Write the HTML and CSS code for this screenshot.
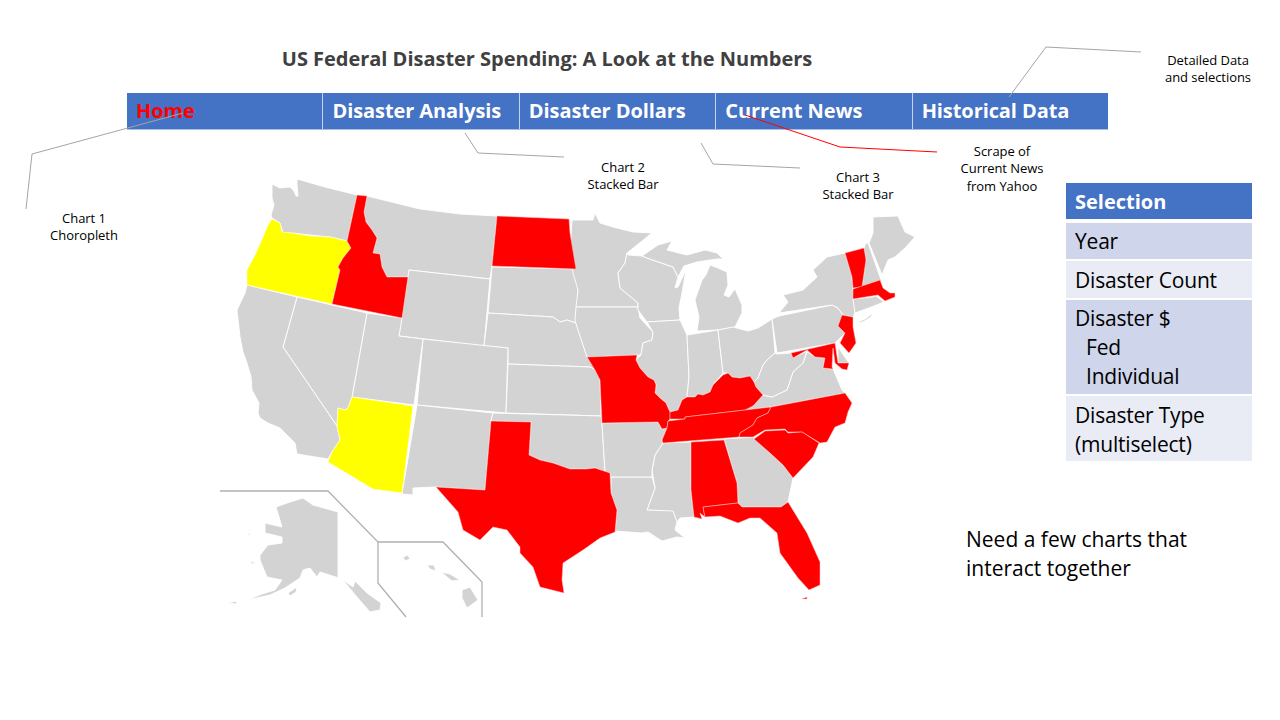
FILE: index.html
```html
<!DOCTYPE html>
<html lang="en">
<head>
<meta charset="utf-8">
<title>US Federal Disaster Spending</title>
<link rel="stylesheet" href="styles.css">
</head>
<body>
<main class="slide">
  <header class="top">
    <h1 class="title">US Federal Disaster Spending: A Look at the Numbers</h1>
    <nav class="nav">
      <div class="tab tab-active">Home</div>
      <div class="tab">Disaster Analysis</div>
      <div class="tab">Disaster Dollars</div>
      <div class="tab">Current News</div>
      <div class="tab">Historical Data</div>
    </nav>
  </header>
  <section class="body">
    <aside class="table">
      <div class="row row-head">Selection</div>
      <div class="row row-a">Year</div>
      <div class="row row-b row-tall">Disaster Count</div>
      <div class="row row-a">Disaster $<span class="sub">Fed</span><span class="sub">Individual</span></div>
      <div class="row row-b">Disaster Type<br>(multiselect)</div>
    </aside>
  </section>

  <svg class="canvas" viewBox="0 0 1280 720" width="1280" height="720" aria-hidden="true">
    <g class="gray">
      <path d="M297 179L325 187L357 195L347 241L330 237L310 235L292 233L283 233L280 223L272 218L271 215L274 205L272 198L272 184L280 188L290 187L294 191L296 196L298 196L297 185Z"/>
      <path d="M367 196L420 209L460 214L497 216L492 266L490 279L409 270L408 277L403 277L387 277L382 267L380 254L373 253L377 238L372 230L366 222L364 212Z"/>
      <path d="M409 270L490 279L484 346L399 336Z"/>
      <path d="M492 267L574 269L578 280L578 308L576 323L567 320L560 322L553 317L488 313Z"/>
      <path d="M488 313L553 317L560 322L567 320L576 323L580 335L587 357L596 370L590 367L508 364L508 348L484 346Z"/>
      <path d="M423 339L508 348L506 413L417 405Z"/>
      <path d="M508 364L590 367L596 370L600 380L601 416L506 413Z"/>
      <path d="M367 313L402 318L399 336L423 339L414 405L352 397Z"/>
      <path d="M297 297L367 313L352 397L348 408L345 410L338 408L337 426L283 347Z"/>
      <path d="M247 285L297 297L283 347L337 426L340 440L332 452L328 459L297 454L295 443L280 428L268 423L260 418L258 413L259 403L252 390L251 377L247 363L243 352L240 337L237 310L245 293Z"/>
      <path d="M417 405L493 413L491 421L485 490L436 487L413 488L413 495L402 494Z"/>
      <path d="M493 413L601 416L602 423L605 472L595 468L586 469L570 469L553 463L540 460L529 455L531 422L491 421Z"/>
      <path d="M572 220L593 220L595 213L600 223L613 227L633 232L652 233L627 253L625 263L618 273L620 288L638 303L638 307L576 307L578 290L573 273L570 250Z"/>
      <path d="M576 307L638 307L640 318L653 332L652 340L643 343L641 355L587 357L577 327L575 320Z"/>
      <path d="M627 253L628 255L642 256L647 258L673 267L678 277L675 288L678 287L686 270L682 293L679 308L680 320L647 322L638 310L638 303L620 288L618 273L625 263Z"/>
      <path d="M642 256L658 245L672 241L667 250L687 255L705 250L717 253L723 259L717 259L697 262L684 266L678 277L673 267L647 258Z"/>
      <path d="M710 265L718 268L727 272L728 285L724 295L729 297L735 289L742 305L742 313L735 327L718 330L697 331L699 317L695 300L702 280L706 275Z"/>
      <path d="M647 322L680 320L687 335L689 377L687 397L682 400L678 410L670 412L669 410L666 403L660 398L655 393L656 385L654 380L648 377L640 368L636 360L641 355L643 343L652 340L653 332Z"/>
      <path d="M687 335L718 330L723 373L713 385L710 392L703 395L698 394L695 397L687 397L689 377Z"/>
      <path d="M718 330L733 327L748 331L758 328L772 319L774 340L775 353L767 360L763 365L758 378L754 382L750 376L740 378L732 377L728 373L723 373Z"/>
      <path d="M779 316L832 305L838 308L843 315L838 326L845 333L835 343L777 353L772 319Z"/>
      <path d="M779 313L788 302L783 295L803 290L817 277L813 270L827 257L845 253L852 277L853 288L855 313L853 317L843 315L838 308L832 305Z"/>
      <path d="M855 323L865 319L873 313L871 317L863 322Z"/>
      <path d="M866 243L868 243L880 277L882 282L862 287L866 260L864 248Z"/>
      <path d="M873 217L898 216L905 232L915 237L905 248L895 257L888 260L882 275L869 243L873 233Z"/>
      <path d="M853 299L872 297L876 296L884 302L874 306L855 313Z"/>
      <path d="M838 347L849 363L838 363Z"/>
      <path d="M807 352L815 357L825 358L823 368L833 369L842 390L845 393L771 407L745 410L753 406L763 395L772 397L787 390L793 372L803 363Z"/>
      <path d="M775 353L777 354L791 353L793 358L807 351L803 363L793 372L787 390L772 397L763 395L756 387L754 382L758 378L763 365L767 360Z"/>
      <path d="M724 439L753 437L770 453L783 465L793 478L788 502L781 507L742 507L738 503L737 483Z"/>
      <path d="M663 443L691 442L691 490L694 517L680 518L677 522L673 512L647 510L655 488L652 470L655 455Z"/>
      <path d="M611 477L652 477L655 488L647 510L673 511L677 522L675 530L685 538L677 537L662 541L648 532L642 533L615 531L617 510L611 493Z"/>
      <path d="M602 423L658 422L662 429L667 428L662 440L663 443L655 455L652 470L652 477L611 477L610 473L605 472Z"/>
      <path d="M276 507L290 502L303 498L313 505L338 512L338 577L343 580L353 587L355 581L367 593L381 603L380 610L370 612L357 597L342 579L320 572L317 577L310 568L303 570L300 578L285 588L270 595L247 600L262 594L275 590L282 580L267 577L260 560L260 555L268 545L282 543L282 537L265 533L265 523L282 527Z"/>
      <path d="M227 603L237 601L236 604Z"/>
      <path d="M288 593L297 587L296 592L290 596Z"/>
      <path d="M250 561L256 563L252 564Z"/>
      <path d="M247 531L252 536L249 535Z"/>
      <path d="M462 590L470 587L478 600L467 608L462 598Z"/>
      <path d="M441 572L450 574L460 580L452 581Z"/>
      <path d="M427 565L434 565L436 571L430 569Z"/>
      <path d="M403 557L408 555L410 559L405 561Z"/>
    </g>
    <g class="yellow">
      <path d="M272 219L280 223L282 232L292 233L310 236L330 237L347 241L351 248L343 258L338 267L340 270L332 304L247 285L247 270L255 255L263 237L268 225Z"/>
      <path d="M352 397L413 406L402 493L373 489L328 462L332 452L340 440L337 426L338 408L345 410L348 408Z"/>
    </g>
    <g class="red">
      <path d="M357 195L367 196L364 212L366 222L372 230L377 238L373 253L380 254L382 267L387 277L403 277L408 277L402 318L332 304L340 270L338 267L343 258L351 248L347 241Z"/>
      <path d="M497 216L569 219L570 233L576 269L492 266Z"/>
      <path d="M491 421L531 422L529 455L540 460L553 463L570 469L586 469L595 468L610 473L611 493L617 510L615 532L600 538L583 550L563 563L562 580L564 593L540 587L533 567L520 553L520 547L507 530L493 527L480 540L463 530L458 512L436 487L485 490Z"/>
      <path d="M587 357L637 355L636 360L640 368L648 377L654 380L656 385L655 393L660 398L666 403L669 410L670 412L670 419L668 421L667 428L662 429L658 422L602 423L600 380L595 370Z"/>
      <path d="M670 419L670 412L678 410L682 400L687 397L695 397L698 394L703 395L710 392L713 385L723 375L728 373L732 377L740 378L750 376L754 382L756 387L763 395L753 406L745 410L685 417L685 419Z"/>
      <path d="M668 421L685 419L685 417L745 410L771 407L768 413L757 418L753 425L740 433L739 437L663 443L662 440L667 428Z"/>
      <path d="M771 407L845 393L852 403L848 412L845 423L835 427L827 442L820 443L802 432L788 432L785 429L765 430L753 437L739 437L740 433L753 425L757 418L768 413Z"/>
      <path d="M754 439L765 431L785 430L788 433L802 432L819 443L813 457L793 478L783 465L770 453Z"/>
      <path d="M691 442L724 440L737 483L738 503L703 507L705 517L700 513L702 519L694 517L691 490Z"/>
      <path d="M703 507L738 503L742 507L781 507L788 502L807 533L820 562L820 585L809 590L798 578L780 553L777 533L760 518L750 518L738 523L720 516L705 517Z"/>
      <path d="M802 599L807 597L807 599Z"/>
      <path d="M845 253L864 248L866 260L862 287L853 288L852 277Z"/>
      <path d="M853 289L880 280L883 288L890 293L895 293L895 297L885 301L878 295L853 299Z"/>
      <path d="M842 315L853 317L853 327L856 343L849 353L840 343L845 333L838 326Z"/>
      <path d="M791 353L835 343L838 363L849 363L847 370L842 369L835 363L833 348L832 367L833 369L823 368L825 358L815 357L807 350L793 358Z"/>
    </g>
    <g class="inset">
      <polyline points="220,491 328,491 378,542 378,583 406,617"/>
      <polyline points="378,542 443,542 482,582 482,617"/>
    </g>
    <g class="callout">
      <polyline points="26,209 32,154 183,113"/>
      <polyline points="465,133 478,153 564,157"/>
      <polyline points="701,143 713,164 800,168"/>
      <polyline points="1009,97 1046,47 1141,52"/>
    </g>
    <polyline class="callout-red" points="745,115 840,147 937,152"/>
  </svg>

  <p class="label label-c1">Chart 1<br>Choropleth</p>
  <p class="label label-c2">Chart 2<br>Stacked Bar</p>
  <p class="label label-c3">Chart 3<br>Stacked Bar</p>
  <p class="label label-news">Scrape of<br>Current News<br>from Yahoo</p>
  <p class="label label-data">Detailed Data<br>and selections</p>
  <p class="note">Need a few charts that<br>interact together</p>
</main>
</body>
</html>
```
FILE: styles.css
```css
* { box-sizing: border-box; }

html, body {
  margin: 0;
  padding: 0;
  background: #fff;
}

.slide {
  position: relative;
  width: 1280px;
  height: 720px;
  overflow: hidden;
  font-family: "Open Sans", "Noto Sans", sans-serif;
  color: #000;
}

.top {
  padding: 42px 0 0 127px;
}

.title {
  margin: 0 0 17px;
  width: 840px;
  text-align: center;
  font-size: 20px;
  line-height: 34px;
  font-weight: 700;
  color: #404040;
  letter-spacing: -0.02px;
}

.nav {
  display: flex;
  width: 981px;
  height: 37px;
  background: #4472c4;
  border-bottom: 1px solid #a9bde2;
}

.tab {
  flex: 1;
  padding-left: 9px;
  border-right: 1.5px solid #c8d3ea;
  color: #fff;
  font-size: 20px;
  line-height: 36px;
  font-weight: 700;
  letter-spacing: -0.08px;
}

.tab:last-child { border-right: 0; }

.tab-active { color: #f00; }

.body {
  display: flex;
  justify-content: flex-end;
  padding: 53px 28px 0 0;
}

.table {
  width: 186px;
  display: flex;
  flex-direction: column;
  font-size: 21px;
  line-height: 29px;
  letter-spacing: -0.2px;
}

.row-head {
  height: 36px;
  margin-bottom: 4px;
  padding: 4px 9px;
  background: #4472c4;
  color: #fff;
  font-size: 20px;
  letter-spacing: 0;
  font-weight: 700;
}

.row-a {
  padding: 4px 9px 3px;
  background: #cfd5ea;
  margin-bottom: 2px;
}

.row-b {
  padding: 5px 9px 2px;
  background: #e9ebf5;
  margin-bottom: 2px;
}

.row-tall { min-height: 37px; }

.sub {
  display: block;
  padding-left: 11px;
}

.canvas {
  position: absolute;
  top: 0;
  left: 0;
}

.gray path {
  fill: #d3d3d3;
  stroke: #fff;
  stroke-width: 0.9;
  stroke-linejoin: round;
}

.yellow path {
  fill: #ff0;
  stroke: #fff;
  stroke-width: 0.5;
  stroke-linejoin: round;
}

.red path {
  fill: #f00;
  stroke: #ffc8c8;
  stroke-width: 0.5;
  stroke-linejoin: round;
}

.inset polyline {
  fill: none;
  stroke: #b0b0b0;
  stroke-width: 1.3;
}

.callout polyline {
  fill: none;
  stroke: #a5a5a5;
  stroke-width: 1;
}

.callout-red {
  fill: none;
  stroke: #f00;
  stroke-width: 1;
}

.label {
  position: absolute;
  margin: 0;
  width: 130px;
  text-align: center;
  font-size: 13px;
  line-height: 17.3px;
  letter-spacing: -0.05px;
}

.label-c1 { left: 19px; top: 210px; }
.label-c2 { left: 558px; top: 159px; }
.label-c3 { left: 793px; top: 169px; }
.label-news { left: 937px; top: 143px; }
.label-data { left: 1143px; top: 52px; }

.note {
  position: absolute;
  left: 966px;
  top: 525px;
  margin: 0;
  font-size: 21px;
  line-height: 29px;
}
```
